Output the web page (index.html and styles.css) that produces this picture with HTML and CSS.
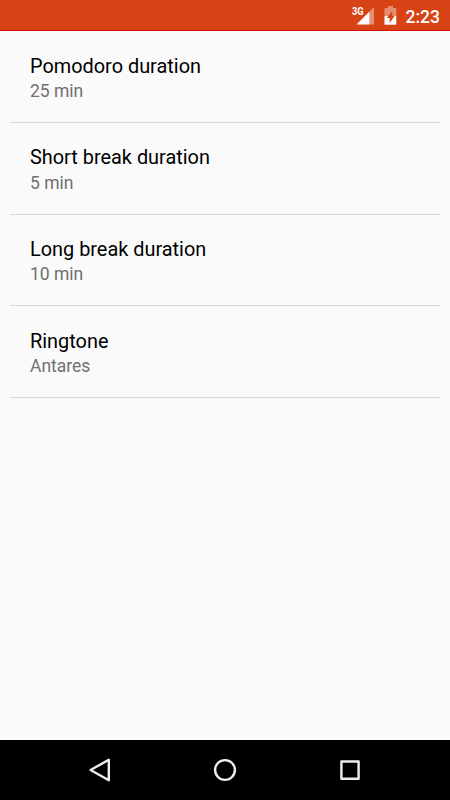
FILE: index.html
```html
<!DOCTYPE html>
<html lang="en">
<head>
<meta charset="utf-8">
<title>Settings</title>
<link rel="stylesheet" href="styles.css">
</head>
<body>
<header class="status">
  <svg class="signal" width="18" height="19" viewBox="0 0 18 19"><path d="M18 1V18.5H13.5V5.5z" fill="#fff" fill-opacity=".4"/><path d="M13.5 5.5V18.5H.5z" fill="#fff"/></svg>
  <span class="network">3G</span>
  <svg class="battery" width="13" height="19" viewBox="0 0 13 19"><path d="M4 0h5v2h3.3v8H.5V2H4z" fill="#fff" fill-opacity=".4"/><path d="M.5 10h11.8v8.7H.5z" fill="#fff"/><path d="M8.2 5L2.7 12h3v5l5-7.2H8.2z" fill="#d84315"/></svg>
  <time class="clock">2:23</time>
</header>
<main class="settings">
  <section class="item low"><h2 class="title">Pomodoro duration</h2><p class="value">25 min</p></section>
  <section class="item"><h2 class="title">Short break duration</h2><p class="value">5 min</p></section>
  <section class="item short"><h2 class="title">Long break duration</h2><p class="value">10 min</p></section>
  <section class="item low"><h2 class="title">Ringtone</h2><p class="value">Antares</p></section>
</main>
<nav class="navbar">
  <svg class="key" width="24" height="26" viewBox="0 0 24 26"><path d="M20.8 2.8v20.4L2.6 13z" stroke-linejoin="round"/></svg>
  <svg class="key" width="24" height="26" viewBox="0 0 24 26"><circle cx="12" cy="13" r="9.9"/></svg>
  <svg class="key" width="24" height="26" viewBox="0 0 24 26"><path d="M3.4 4.5h17.2v17.2H3.4z" stroke-linejoin="round"/></svg>
</nav>
</body>
</html>
```
FILE: styles.css
```css
* { box-sizing: border-box; }
body { margin: 0; height: 800px; display: flex; flex-direction: column; background: #fafafa; font-family: Roboto, sans-serif; }
.status { position: relative; height: 31px; flex: none; background: #d84315; border-bottom: 1px solid #d50f0a; color: #fff; display: flex; justify-content: flex-end; align-items: flex-start; padding: 6px 10px 0 0; }
.signal { margin-right: 10px; }
.network { position: absolute; left: 352px; top: 6px; font-size: 10px; line-height: 12px; font-weight: 700; transform: scaleX(.93); transform-origin: left; }
.battery { margin-right: 9px; }
.clock { font-size: 17.5px; line-height: 22px; font-weight: 500; color: #fff; }
.settings { flex: 1; padding: 0 10px; }
.item { height: 92px; padding: 22px 20px 0; border-bottom: 1px solid #d8d8d8; }
.title { margin: 0; font-size: 19.9px; line-height: 26px; font-weight: 400; color: #000; }
.value { margin: 0; font-size: 17.5px; line-height: 24px; color: #707070; }
.item.low { padding-top: 23px; }
.item.low .value { line-height: 22px; }
.item.short { height: 91px; }
.item.short .value { line-height: 22px; }
.navbar { height: 60px; flex: none; background: #000; display: flex; justify-content: center; align-items: center; gap: 101px; }
.key { fill: none; stroke: #eee; stroke-width: 2.4; }
```
